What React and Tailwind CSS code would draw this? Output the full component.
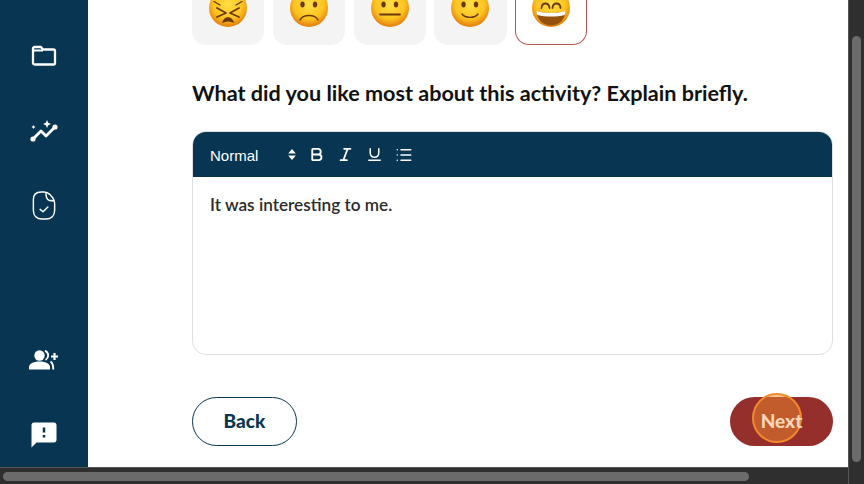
import { Bold, Italic, Underline, List } from "lucide-react";
import { MdFeedback } from "react-icons/md";

const face = (
  <defs>
    <radialGradient id="skin" cx="50%" cy="40%" r="58%">
      <stop offset="0%" stopColor="#ffdf45" />
      <stop offset="68%" stopColor="#fcc21e" />
      <stop offset="100%" stopColor="#e5820f" />
    </radialGradient>
  </defs>
);

function Emoji({ children }) {
  return (
    <svg width="38" height="38" viewBox="0 0 38 38" fill="none" className="shrink-0">
      {face}
      <circle cx="19" cy="19" r="19" fill="url(#skin)" />
      {children}
    </svg>
  );
}

const line = { stroke: "#6b3a0c", strokeWidth: 1.4, strokeLinecap: "round", strokeLinejoin: "round" };

const eyes = (
  <>
    <ellipse cx="12.500" cy="15.500" rx="2.200" ry="3" fill="#6b3a0c" />
    <ellipse cx="25" cy="15.500" rx="2.200" ry="3" fill="#6b3a0c" />
  </>
);

const emojis = [
  <Emoji key="tired">
    <path d="M8 19l9 5-9 4M30 19l-9 5 9 4" {...line} strokeWidth="1.800" />
    <path d="M5 12.500l6 3.500M33 12.500l-6 3.500" {...line} />
    <path d="M13 34c1-4 3.500-6 6-6s5 2 6.500 6c-4-2-8.500-2-12.500 0z" fill="#6b3a0c" />
  </Emoji>,
  <Emoji key="sad">
    {eyes}
    <path d="M10 31c3-6 15-6 18 0" {...line} />
  </Emoji>,
  <Emoji key="neutral">
    {eyes}
    <path d="M9 25.500h20" {...line} strokeWidth="1.800" />
  </Emoji>,
  <Emoji key="smile">
    {eyes}
    <path d="M11 25c3 4.500 13 4.500 16 0" {...line} />
  </Emoji>,
  <Emoji key="grin">
    <path d="M9.500 19c.5-6 7.500-6 8 0M20.500 19c.5-6 7.500-6 8 0" {...line} strokeWidth="1.800" />
    <path d="M4.500 22c8 2.500 21 2.500 29 0-.2 8-6 14.500-14.500 14.500S4.700 30 4.500 22z" fill="#94520d" />
    <path d="M4.500 22c8 2.500 21 2.500 29 0 0 1.500-.3 3-.9 4-8 2-19.200 2-27.200 0-.6-1-.9-2.500-.9-4z" fill="#fff" />
  </Emoji>,
];

function FolderIcon() {
  return (
    <svg width="26" height="22" viewBox="0 0 26 22" fill="none">
      <path
        d="M2 3.500c0-.8.6-1.500 1.500-1.500h6.500l2 2.500h10.500c.8 0 1.500.7 1.500 1.500v12c0 .8-.7 1.500-1.500 1.500H3.500C2.600 19.500 2 18.800 2 18z"
        stroke="#fff"
        strokeWidth="2.300"
        strokeLinejoin="round"
      />
      <path d="M2 5.500h10" stroke="#fff" strokeWidth="2" />
    </svg>
  );
}

function SparkIcon() {
  return (
    <svg width="28" height="22" viewBox="0 0 28 22" fill="none">
      <path d="M3 19l8-8 5 5 9-9" stroke="#fff" strokeWidth="2.800" strokeLinecap="round" strokeLinejoin="round" />
      <circle cx="3" cy="19" r="2.600" fill="#fff" />
      <circle cx="25" cy="7" r="2.600" fill="#fff" />
      <path d="M17 0l1.200 2.800 2.800 1.200-2.800 1.200-1.200 2.800-1.200-2.800-2.800-1.200 2.800-1.200zM3.500 5l.7 1.300 1.300.7-1.300.7-.7 1.300-.7-1.300L1.500 7l1.300-.7z" fill="#fff" />
    </svg>
  );
}

function FileCheckIcon() {
  return (
    <svg width="24" height="29" viewBox="0 0 24 30" fill="none">
      <path
        d="M12 1c3 0 4 .5 6 2.500l3 3.500c1.500 2 2 3 2 6v7c0 5.500-3.500 9-9 9h-4c-5.500 0-9-3.500-9-9V9c0-5 3-8 8-8z"
        stroke="#fff"
        strokeWidth="1.500"
      />
      <path d="M14 1.500c0 4 .5 7 3 8 2 .6 4 .5 5.500.5" stroke="#fff" strokeWidth="1.500" />
      <path d="M8 19l3 2.500 5-5" stroke="#fff" strokeWidth="1.500" strokeLinecap="round" strokeLinejoin="round" />
    </svg>
  );
}

function PersonPlusIcon() {
  return (
    <svg width="30" height="20" viewBox="0 0 30 20" fill="none">
      <circle cx="10.500" cy="5.500" r="5.200" fill="#fff" />
      <path d="M0 19.500v-2.500c0-3 3.500-5.500 10.500-5.500s10.500 2.500 10.500 5.500v2.500z" fill="#fff" />
      <path d="M16 .6c2 1 3.200 3 3.200 4.900s-1.200 3.500-2.700 4.500" stroke="#fff" strokeWidth="1.800" />
      <path d="M21.500 11.500c1.800 1 2.800 3 2.800 8" stroke="#fff" strokeWidth="2" />
      <path d="M25.500 3v7M22 6.500h7" stroke="#fff" strokeWidth="2.200" />
    </svg>
  );
}

function HeaderArrows() {
  return (
    <svg width="8" height="11" viewBox="0 0 8 11" fill="#fff">
      <path d="M4 0l3.800 4.500H.2zM4 11L.2 6.500h7.600z" />
    </svg>
  );
}

export default function App() {
  return (
    <div className="flex h-[484px] w-[864px] flex-col overflow-hidden bg-[#2f2f2f] font-['Lato',sans-serif]">
      <div className="flex min-h-0 flex-1">
        <div className="flex min-w-0 flex-1 flex-col">
          <div className="flex h-[467px] w-[848px]">
            {/* Sidebar */}
            <aside className="flex w-[88px] shrink-0 flex-col items-center bg-[#073552] pb-[17px] pt-[45px]">
              <FolderIcon />
              <div className="mt-[53px]"><SparkIcon /></div>
              <div className="mt-[49px]"><FileCheckIcon /></div>
              <div className="mt-auto"><PersonPlusIcon /></div>
              <MdFeedback size={30} color="#fff" className="mt-[50px]" />
            </aside>

            {/* Main */}
            <main className="relative flex-1 bg-white pl-[104px] pr-[15px]">
              <div className="flex h-[45px] gap-[8.500px]">
                {emojis.map((emoji, i) => (
                  <div
                    key={i}
                    className={`flex h-[45px] w-[72.250px] items-end justify-center overflow-hidden rounded-b-[14px] ${
                      i === 4 ? "border border-t-0 border-[#bb5552] bg-white pb-[17px]" : "bg-[#f4f4f4] pb-[18px]"
                    }`}
                  >
                    {emoji}
                  </div>
                ))}
              </div>

              <h2 className="mt-[33px] text-[21.600px] font-bold leading-[30px] text-[#111]">
                What did you like most about this activity? Explain briefly.
              </h2>

              <div className="mt-[23px] h-[224px] overflow-hidden rounded-[14px] border border-[#dddfe2]">
                <div className="flex h-[45px] items-center bg-[#073552] pl-[17px] text-white">
                  <span className="mt-[4px] w-[78px] font-['Liberation_Sans',sans-serif] text-[15px]">Normal</span>
                  <HeaderArrows />
                  <Bold size={17} strokeWidth={2.600} className="ml-[12px]" />
                  <Italic size={17} strokeWidth={2.400} className="ml-[12px]" />
                  <Underline size={17} strokeWidth={2.200} className="ml-[12px]" />
                  <List size={18} strokeWidth={2} className="ml-[12px]" />
                </div>
                <p className="pl-[17px] pt-[17px] text-[17.200px] font-semibold leading-[22px] text-[#2b2b2b]">
                  It was interesting to me.
                </p>
              </div>

              <div className="mt-[42px] flex justify-between">
                <button className="h-[49px] w-[105px] rounded-full border border-[#073552] bg-white text-[19px] font-black text-[#073552]">
                  Back
                </button>
                <button className="relative z-10 h-[49px] w-[103px] rounded-full text-[19px] font-black text-[#fbd6b8]">
                  Next
                </button>
              </div>

              {/* button fill sits under the click highlight so the label stays on top */}
              <div className="absolute left-[642px] top-[397px] h-[49px] w-[103px] rounded-full bg-[#952f2c]" />
              <div className="absolute left-[664px] top-[393px] h-[50px] w-[50px] rounded-full border-2 border-[#f08a2c] bg-[#f08a2c]/50" />
            </main>
          </div>
          {/* Horizontal scrollbar */}
          <div className="flex h-[17px] items-center border-t border-[#555] pl-[3px]">
            <div className="h-[9px] w-[746px] rounded-full bg-[#6b6b6b]" />
          </div>
        </div>

        {/* Vertical scrollbar */}
        <div className="flex w-[16px] shrink-0 flex-col border-l border-[#555] pb-[22px] pl-[3px] pt-[36px]">
          <div className="w-[9px] flex-1 rounded-full bg-[#6b6b6b]" />
        </div>
      </div>
    </div>
  );
}
